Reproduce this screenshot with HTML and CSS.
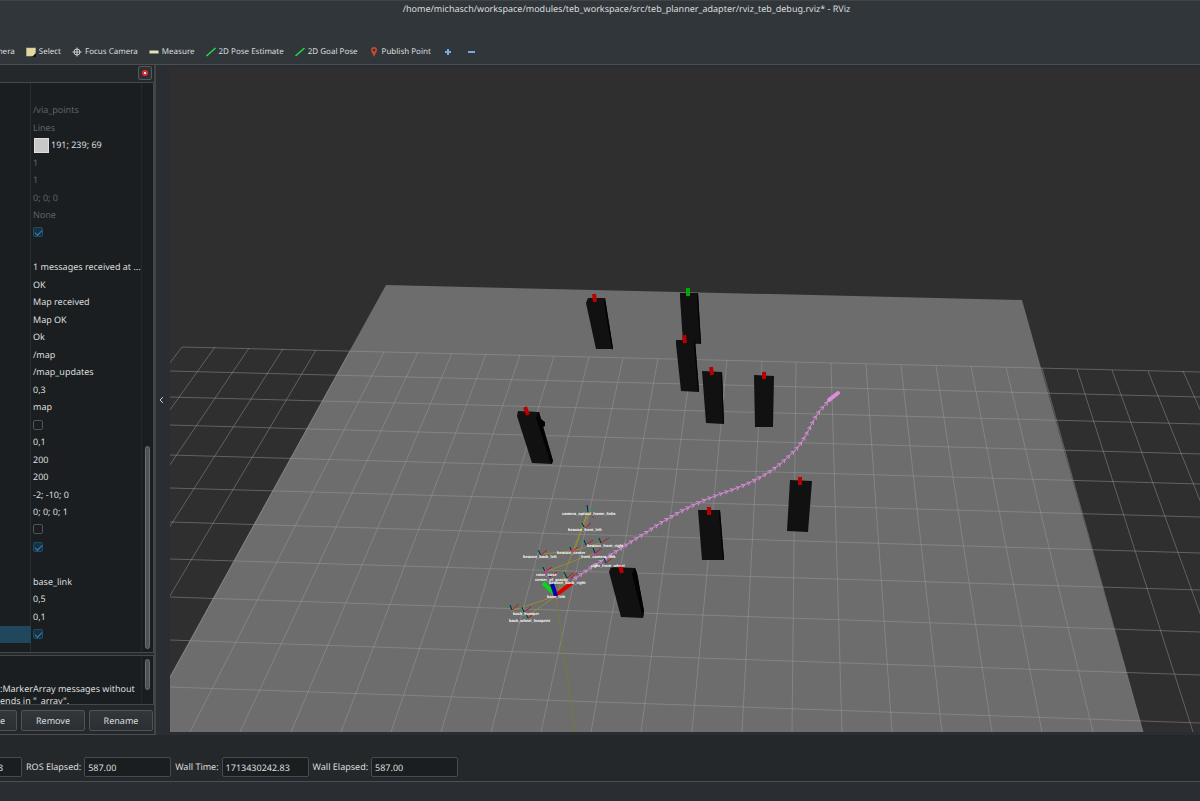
FILE: index.html
```html
<!DOCTYPE html>
<html lang="en">
<head>
	<meta charset="UTF-8">
	<title>rviz_teb_debug.rviz* - RViz</title>
	<link rel="stylesheet" href="styles.css">
</head>
<body>
	<header class="titlebar">/home/michasch/workspace/modules/teb_workspace/src/teb_planner_adapter/rviz_teb_debug.rviz* - RViz</header>

	<nav class="toolbar">
		<button class="tool tool-first">Move Camera</button>
		<button class="tool">
			<svg width="10" height="10" viewBox="0 0 10 10"><path d="M0.5 1h9v6l-2 2h-7z" fill="#e0d8a0"/><path d="M0.5 1h9v6l-2 2h-7z" fill="none" stroke="#c9c08a" stroke-dasharray="1 1"/><path d="M10 6v4H6z" fill="#111"/></svg>
			Select
		</button>
		<button class="tool">
			<svg width="10" height="10" viewBox="0 0 10 10"><circle cx="5" cy="5" r="3" fill="none" stroke="#d0d0d0"/><path d="M5 0.5v9M0.5 5h9" stroke="#d0d0d0"/></svg>
			Focus Camera
		</button>
		<button class="tool">
			<svg width="10" height="10" viewBox="0 0 10 10"><path d="M0.5 3.5h9v3h-9z" fill="#e8e0b8"/><path d="M0.5 6.5h9" stroke="#8c8664"/></svg>
			Measure
		</button>
		<button class="tool">
			<svg width="10" height="10" viewBox="0 0 10 10"><path d="M0.5 9L9.500 1" stroke="#1fe03a" stroke-width="1.500"/></svg>
			2D Pose Estimate
		</button>
		<button class="tool">
			<svg width="10" height="10" viewBox="0 0 10 10"><path d="M0.5 9L9.500 1" stroke="#1fe03a" stroke-width="1.500"/></svg>
			2D Goal Pose
		</button>
		<button class="tool">
			<svg width="10" height="10" viewBox="0 0 10 10"><path d="M5 10C4 7 2 5 2 3a3 3 0 0 1 6 0c0 2-2 4-3 7z" fill="#c9492c"/><circle cx="5" cy="3" r="1.300" fill="#31363b"/></svg>
			Publish Point
		</button>
		<button class="tool tool-icon" aria-label="Add tool">
			<svg width="8" height="8" viewBox="0 0 8 8"><path d="M4 1v6M1 4h6" stroke="#7aa7e8" stroke-width="2"/></svg>
		</button>
		<button class="tool tool-icon" aria-label="Remove tool">
			<svg width="8" height="8" viewBox="0 0 8 8"><path d="M1 4h7" stroke="#7aa7e8" stroke-width="2"/></svg>
		</button>
	</nav>

	<main class="workspace">
		<aside class="dock">
			<div class="dock-header">
				<button class="dock-close" aria-label="Close">
					<svg width="6" height="6" viewBox="0 0 6 6"><circle cx="3" cy="3" r="3" fill="#dc2f2f"/><path d="M2 2l2 2M4 2L2 4" stroke="#ffd9d9"/></svg>
				</button>
			</div>

			<div class="tree">
				<ul class="props">
					<li></li>
					<li class="off">/via_points</li>
					<li class="off">Lines</li>
					<li><span class="swatch"></span>191; 239; 69</li>
					<li class="off">1</li>
					<li class="off">1</li>
					<li class="off">0; 0; 0</li>
					<li class="off">None</li>
					<li><input type="checkbox" aria-label="Enabled" checked></li>
					<li></li>
					<li>1 messages received at ...</li>
					<li>OK</li>
					<li>Map received</li>
					<li>Map OK</li>
					<li>Ok</li>
					<li>/map</li>
					<li>/map_updates</li>
					<li>0,3</li>
					<li>map</li>
					<li><input type="checkbox" aria-label="Draw behind"></li>
					<li>0,1</li>
					<li>200</li>
					<li>200</li>
					<li>-2; -10; 0</li>
					<li>0; 0; 0; 1</li>
					<li><input type="checkbox" aria-label="Use timestamp"></li>
					<li><input type="checkbox" aria-label="Visible" checked></li>
					<li></li>
					<li>base_link</li>
					<li>0,5</li>
					<li>0,1</li>
					<li class="selected"><input type="checkbox" aria-label="Display" checked></li>
				</ul>
				<div class="scroll"><div class="thumb thumb-tree"></div></div>
			</div>

			<div class="help">
				<p class="help-text">:MarkerArray messages without<br>ends in "_array".</p>
				<div class="scroll"><div class="thumb thumb-help"></div></div>
			</div>

			<div class="dock-buttons">
				<button>Duplicate</button>
				<button>Remove</button>
				<button>Rename</button>
			</div>
		</aside>

		<button class="handle" aria-label="Hide panel">
			<svg width="6" height="8" viewBox="0 0 6 8"><path d="M5 1L2 4l3 3" fill="none" stroke="#c8cacb"/></svg>
		</button>

		<section class="view">
			<svg class="scene" viewBox="170 68 1030 664" preserveAspectRatio="xMinYMin slice">
				<!-- map -->
				<polygon points="386,285 1022,300 1143,732 139,732" fill="#6d6d6d"/>

				<!-- grid -->
				<g class="grid">
					<path d="M182 347L1200 372M170 371L1200 397M170 397L1200 424M170 425L1200 454M170 455L1200 484M170 488L1200 517M170 522L1200 553M170 559L1200 590M170 597L1200 632M170 640L1200 675M170 687L1200 723"/>
					<path d="M182 347L-111 732M215 347L-61 732M249 348L-11 732M283 349L39 732M316 350L89 732M350 351L140 732M384 352L190 732M418 352L240 732M452 353L291 732M486 354L341 732M520 355L391 732M554 356L441 732M589 357L491 732M623 358L541 732M658 358L591 732M692 359L641 732M727 360L692 732M762 361L742 732M796 362L792 732M831 363L842 732M866 364L892 732M901 365L942 732M936 366L992 732M971 366L1042 732M1006 367L1093 732M1042 368L1143 732M1077 369L1193 732M1112 370L1243 732M1148 371L1293 732M1183 371L1343 732"/>
				</g>

				<!-- planned trajectory, the poses are added in script.js -->
				<path id="plan" class="plan" d="M573 580C583 573 593 566 603 560C618 550 632 541 647 532C658 524 680 511 700 502C720 493 738 489 755 480C772 472 786 460 798 447C810 432 812 418 825 405C829 400 833 396 838 393"/>
				<g id="poses" class="poses"></g>
				<path d="M829 400L838 393" stroke="#dc8edc" stroke-width="4" stroke-linecap="round"/>

				<!-- obstacles -->
				<g class="box">
					<path d="M586 303L588 298H605L613 349 596 349z"/>
					<path d="M680 297L680 293H698L701 344 683 343z"/>
					<path d="M676 344L676 340H695L699 392 681 391z"/>
					<path d="M702 371L722 372 724 424 706 423z"/>
					<path d="M754 375L774 376 773 427 755 427z"/>
					<path d="M517 416L518 411 539 412 553 461 552 464 532 463z"/>
					<path d="M790 480L812 481 808 532 787 531z"/>
					<path d="M698 510H720L724 560 702 560z"/>
					<path d="M609 572L611 567 635 568 637 573 644 611 643 618 621 617z"/>
				</g>
				<g class="side">
					<path d="M605 298L613 348 612 350 604 303z"/>
					<path d="M698 293L701 343 700 344 697 296z"/>
					<path d="M695 340L699 390 698 392 694 344z"/>
					<path d="M722 372L724 423 723 424 721 374z"/>
					<path d="M539 412L541 419 545 422 545 426 543 427 553 461 551 464 536 418z"/>
					<path d="M720 510L724 559 723 560 719 514z"/>
					<path d="M635 568L637 573 644 611 643 618 632 574z"/>
				</g>
				<g class="peg">
					<path d="M594 294l1 8"/>
					<path d="M684 335l1 8"/>
					<path d="M711 367l1 8"/>
					<path d="M764 372v7"/>
					<path d="M525 407l3 8"/>
					<path d="M800 477v8"/>
					<path d="M709 507v8"/>
					<path d="M620 565l2 8"/>
					<path class="peg-green" d="M688 288v8"/>
				</g>

				<!-- tf tree -->
				<g class="links">
					<path d="M588 512L573 551 556 596M587 513L574 552M583 528L588 513M541 554L573 551 600 543M545 572L595 553M556 596L511 611M556 596L526 617M556 596L567 577" stroke="#9a942c"/>
					<path d="M556 596L562 640 575 732" stroke="#7d7a35"/>
				</g>
				<g class="axis-red">
					<path d="M588 512l6 6M585 528l6-5M541 555l6-5M545 572l7-5M550 577l7-5M572 552l6-5M586 545l7-5M601 543l8-5M595 553l7-5M606 563l6-5M567 578l6-5M571 578l6-5M512 610l7-6M524 612l7-5M528 618l8-5"/>
				</g>
				<g class="axis-green">
					<path d="M588 513l6-4M588 511l-5-4M584 527l-5-4M541 555l-4-5M545 571l-5-5M550 577l-4-4M572 552l-4-5M586 545l-5-5M601 543l-4-5M595 553l-4-5M606 563l-5-5M567 578l-5-6M512 610l-5-6M524 612l-5-6M528 618l-5-5"/>
				</g>
				<g class="axis-blue">
					<path d="M588 512l-1-7M584 527l-2-4M541 555l-3-5M545 572l-2-5M550 577l-2-4M572 552l-2-5M586 545l-2-5M601 543l-2-5M595 553l-2-5M606 563l-2-5M567 578l-3-6M512 610l-2-5M524 612l-2-5M528 618l-2-4"/>
				</g>
				<g class="frame-main">
					<path d="M556 595L572 583" stroke="#e00000"/>
					<path d="M555 594L543 583" stroke="#00dd10"/>
					<path d="M556 596L552 584" stroke="#0000b0"/>
				</g>
				<path d="M571 551h3M552 597h3M594 554h3M544 572h3" stroke="#f02090" stroke-width="2"/>
				<g class="frames">
					<text x="562" y="515">camera_optical_frame_links</text>
					<text x="568" y="531">beacon_front_left</text>
					<text x="523" y="558">beacon_back_left</text>
					<text x="557" y="554">beacon_center</text>
					<text x="587" y="547">beacon_front_right</text>
					<text x="581" y="558">front_camera_link</text>
					<text x="591" y="567">right_front_wheel</text>
					<text x="536" y="576">rotor_base</text>
					<text x="535" y="581">center_of_gravity</text>
					<text x="549" y="584">beacon_back_right</text>
					<text x="547" y="598">base_link</text>
					<text x="513" y="615">back_bumper</text>
					<text x="509" y="622">back_wheel_footprint</text>
				</g>
			</svg>
		</section>
	</main>

	<footer class="time">
		<input class="time-first" aria-label="ROS Time" value="1713430242.83" readonly>
		<label for="ros-elapsed">ROS Elapsed:</label>
		<input id="ros-elapsed" value="587.00" readonly>
		<label for="wall-time">Wall Time:</label>
		<input id="wall-time" value="1713430242.83" readonly>
		<label for="wall-elapsed">Wall Elapsed:</label>
		<input id="wall-elapsed" value="587.00" readonly>
	</footer>
	<div class="statusbar"></div>

	<script src="script.js"></script>
</body>
</html>
```

FILE: styles.css
```css
*{
	margin: 0;
	padding: 0;
	box-sizing: border-box;
}

body{
	display: flex;
	flex-direction: column;
	height: 100vh;
	overflow: hidden;
	background: #2a2d32;
	color: #dcdedf;
	font: 9px/12px "Noto Sans", sans-serif;
	text-rendering: geometricPrecision;
}

button, input{
	font: inherit;
	color: inherit;
	text-rendering: inherit;
}

ul{
	list-style: none;
}

svg{
	display: block;
	flex: none;
}

.titlebar{
	height: 37px;
	padding-left: 53px;
	border-top: 1px solid #3f4448;
	background: #31363b;
	line-height: 16px;
	text-align: center;
	white-space: nowrap;
}

/* toolbar */
.toolbar{
	display: flex;
	align-items: center;
	gap: 11px;
	height: 28px;
	padding-top: 2px;
	border-bottom: 1px solid #4b4f53;
	background: #31363b;
	font-size: 8px;
	overflow: hidden;
}

.tool{
	display: flex;
	align-items: center;
	gap: 3px;
	flex: none;
	border: 0;
	background: none;
	white-space: nowrap;
}

.tool-first{
	margin-left: -37px;
}

.tool-icon{
	padding: 0 2px;
}

.workspace{
	display: flex;
	flex: 1;
	min-height: 0;
}

/* displays panel */
.dock{
	display: flex;
	flex-direction: column;
	flex: none;
	width: 156px;
	border-right: 2px solid #414548;
	border-bottom: 1px solid #4b4f53;
	background: #25282b;
	overflow: hidden;
}

.dock-header{
	display: flex;
	justify-content: flex-end;
	padding: 1px 2px 2px;
}

.dock-close{
	display: flex;
	align-items: center;
	justify-content: center;
	width: 14px;
	height: 14px;
	border: 1px solid #55595d;
	border-radius: 2px;
	background: #2d3136;
}

.tree, .help{
	display: flex;
	border: solid #44484b;
	border-width: 1px 1px 1px 0;
	background: #1b1e20;
}

.tree{
	flex: 1;
	min-height: 0;
}

.props{
	display: grid;
	grid-template-rows: repeat(32, 1fr);
	flex: 1;
	min-width: 0;
	padding: 1px 0 9px;
	background: linear-gradient(#2b2e31, #2b2e31) 30px 0 / 1px 100% no-repeat;
}

.props li{
	display: flex;
	align-items: center;
	min-height: 0;
	padding-left: 33px;
	white-space: nowrap;
}

.props .off{
	color: #606365;
}

.props .selected{
	background: linear-gradient(#1f485f, #1f485f) 0 0 / 31px 100% no-repeat;
}

.swatch{
	width: 15px;
	height: 15px;
	margin: 0 2px 0 1px;
	border: 1px solid #dedede;
	background: #c8c8c8;
}

input[type=checkbox]{
	appearance: none;
	width: 10px;
	height: 10px;
	border: 1px solid #505356;
	border-radius: 2px;
}

input[type=checkbox]:checked{
	display: flex;
	justify-content: center;
	border-color: #1d4c69;
	background: #18313f;
}

input[type=checkbox]:checked::after{
	content: "";
	width: 6px;
	height: 3px;
	margin-top: 2px;
	border: solid #2a86cc;
	border-width: 0 0 1px 1px;
	transform: rotate(-45deg);
}

.scroll{
	flex: none;
	display: flex;
	flex-direction: column;
	width: 12px;
	padding: 3px;
	border-left: 1px solid #25282a;
}

.thumb{
	width: 5px;
	border: 1px solid #6a6d6f;
	border-radius: 3px;
	background: #505355;
}

.thumb-tree{
	height: 36%;
	margin-top: auto;
}

.thumb-help{
	height: 31px;
}

.help{
	height: 50px;
	margin-top: 2px;
	overflow: hidden;
}

.help-text{
	flex: 1;
	min-width: 0;
	padding-top: 27px;
	white-space: nowrap;
}

.dock-buttons{
	display: flex;
	gap: 4px;
	margin-left: -47px;
	padding: 5px 1px 3px 0;
}

.dock-buttons button{
	flex: 1;
	height: 21px;
	border: 1px solid #4f5357;
	border-radius: 2px;
	background: linear-gradient(#32373c, #2b2f33);
}

.handle{
	display: flex;
	align-items: center;
	flex: none;
	width: 14px;
	padding-left: 2px;
	border: 0;
	background: #2a2d32;
}

/* 3d view */
.view{
	flex: 1;
	min-width: 0;
	padding: 3px 0;
}

.scene{
	width: 100%;
	height: 100%;
	background: #2f2f2f;
}

.grid{
	fill: none;
	stroke: #a0a0a4;
	stroke-opacity: 0.45;
}

.plan{
	fill: none;
	stroke: #d58ad5;
}

.poses{
	fill: none;
	stroke: #d58ad5;
}

.box{
	fill: #111111;
}

.side{
	fill: #030303;
}

.peg{
	stroke: #b80000;
	stroke-width: 4;
}

.peg-green{
	stroke: #00a800;
}

.links{
	fill: none;
	stroke-opacity: 0.8;
}

.axis-red{
	stroke: #c01818;
}

.axis-green{
	stroke: #10b020;
}

.axis-blue{
	stroke: #101090;
}

.frame-main{
	stroke-width: 4;
}

.frames{
	fill: #ffffff;
	font: bold 4px "Liberation Sans", sans-serif;
}

/* time panel */
.time{
	display: flex;
	align-items: flex-end;
	height: 47px;
	padding-bottom: 4px;
	border-bottom: 1px solid #4b4f53;
	background: #25282b;
	white-space: nowrap;
}

.time input{
	flex: none;
	width: 87px;
	height: 20px;
	padding: 0 3px;
	border: 1px solid #474b4e;
	border-radius: 2px;
	background: #1b1e20;
}

.time label{
	padding: 0 3px 0 4px;
	line-height: 20px;
}

.time .time-first{
	margin-left: -65px;
}

.statusbar{
	height: 19px;
}
```

FILE: script.js
```js
// put one arrow head every few pixels along the plan
var plan = document.getElementById("plan");
var poses = document.getElementById("poses");
var total = plan.getTotalLength();

for(var d = 4; d < total - 4; d += 6){
	var a = plan.getPointAtLength(d);
	var b = plan.getPointAtLength(d + 1);
	var angle = Math.atan2(b.y - a.y, b.x - a.x) * 180 / Math.PI;
	var head = document.createElementNS("http://www.w3.org/2000/svg", "path");
	head.setAttribute("d", "M-2 -2L1 0L-2 2");
	head.setAttribute("transform", "translate(" + a.x + " " + a.y + ") rotate(" + angle + ")");
	poses.appendChild(head);
}
```
